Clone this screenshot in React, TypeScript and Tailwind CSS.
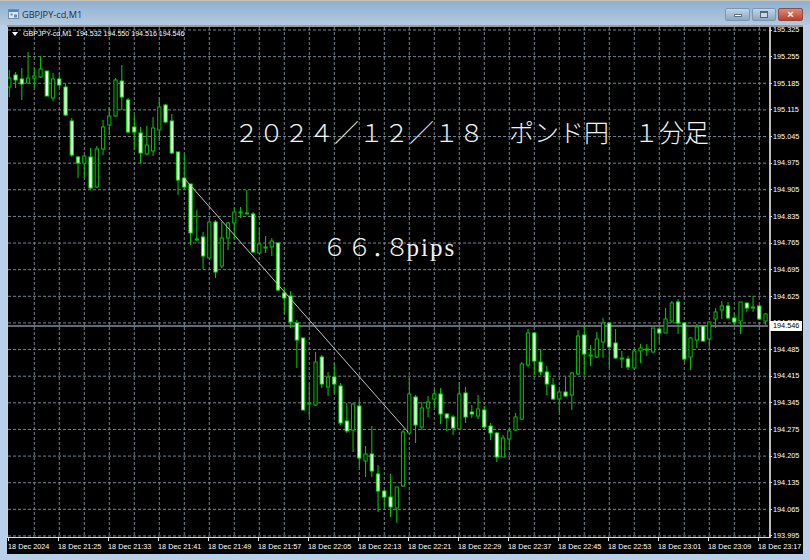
const candles: [number, number, number, number, number][] = [
[70,78,87,97,0],[72,75,80,88,1],[68,79,84,100,1],[52,78,83,83,0],[68,76,78,88,0],[56,69,77,78,0],[71,71,96,96,1],[73,79,98,101,0],[73,79,85,87,1],[83,87,115,116,1],
[118,121,155,157,1],[156,157,163,178,1],[155,156,163,178,0],[148,157,188,190,1],[146,149,187,188,0],[120,127,149,155,0],[107,116,125,135,0],[78,80,116,117,0],[65,81,97,110,1],[98,100,132,133,1],
[115,127,132,150,1],[127,133,153,163,1],[126,145,154,155,0],[117,128,151,156,0],[97,107,130,141,0],[104,105,122,123,1],[114,121,153,154,1],[152,152,180,195,1],[154,178,187,190,1],[184,184,233,245,1],
[210,239,240,241,0],[232,237,256,269,1],[220,222,258,258,0],[220,222,272,278,1],[222,238,266,268,0],[222,223,238,250,0],[208,212,223,239,0],[207,212,213,218,0],[190,213,214,214,0],[212,214,252,253,1],
[228,244,253,254,0],[236,247,248,253,0],[238,241,247,256,0],[243,243,290,291,1],[287,293,298,314,1],[291,296,322,328,1],[320,323,340,368,1],[338,338,410,410,1],[383,403,404,417,0],[352,362,405,406,0],
[355,357,384,388,1],[372,377,387,396,0],[363,377,384,393,1],[383,386,423,425,1],[403,421,431,433,1],[403,404,430,452,0],[400,406,458,468,1],[446,454,461,477,0],[426,454,471,477,1],[465,474,491,512,1],
[490,491,497,507,1],[474,497,507,517,1],[487,487,508,523,0],[430,432,486,487,0],[378,394,433,434,0],[395,397,425,443,1],[402,408,427,430,0],[396,402,408,417,0],[390,394,399,408,0],[388,394,414,424,1],
[413,414,418,431,1],[415,417,428,435,1],[382,394,429,430,0],[387,393,417,423,1],[405,412,414,418,1],[395,409,416,419,0],[406,410,427,428,1],[423,426,433,440,1],[432,433,457,462,1],[435,438,457,457,0],
[430,431,439,450,0],[413,417,430,431,0],[362,364,419,420,0],[329,333,365,367,0],[332,333,361,375,1],[349,362,372,375,1],[366,372,384,395,1],[378,385,399,400,1],[390,392,399,412,0],[377,392,396,397,1],
[372,373,395,410,0],[330,336,374,375,0],[325,335,354,375,1],[345,355,356,366,0],[332,339,357,358,0],[318,323,342,358,0],[322,323,347,368,1],[329,343,358,359,1],[351,358,359,368,0],[356,359,367,370,1],
[350,351,368,368,0],[344,348,351,363,0],[344,349,350,356,0],[328,328,352,353,0],[328,329,333,343,1],[308,319,333,333,0],[301,303,321,323,0],[299,302,323,334,1],[323,323,359,362,1],[337,338,357,370,0],
[324,327,340,348,0],[325,326,341,342,1],[321,322,339,347,0],[308,312,319,328,0],[301,306,310,319,0],[302,306,318,319,1],[313,318,322,326,1],[302,302,321,334,0],[303,303,308,312,1],[296,307,308,312,0],
[305,306,319,320,1],[313,314,321,325,0],
];

const prices = ["195.325","195.255","195.185","195.115","195.045","194.975","194.905","194.835","194.765","194.695","194.625","194.555","194.485","194.415","194.345","194.275","194.205","194.135","194.065","193.995"];
const times = ["18 Dec 2024","18 Dec 21:25","18 Dec 21:33","18 Dec 21:41","18 Dec 21:49","18 Dec 21:57","18 Dec 22:05","18 Dec 22:13","18 Dec 22:21","18 Dec 22:29","18 Dec 22:37","18 Dec 22:45","18 Dec 22:53","18 Dec 23:01","18 Dec 23:09","18 Dec 23:17"];
const gridY = prices.map((_, i) => 30 + i * 26.63);
const gridX = Array.from({ length: 30 }, (_, i) => 34.3 + i * 25);

function Chart() {
  return (
    <svg width={760} height={510} viewBox="8 27 760 510" className="block">
      {gridY.map((y) => (
        <line key={y} x1={8} x2={768} y1={y} y2={y} stroke="#76858f" strokeWidth={1} strokeDasharray="3 2" />
      ))}
      {gridX.map((x) => (
        <line key={x} x1={x} x2={x} y1={27} y2={537} stroke="#76858f" strokeWidth={1} strokeDasharray="3 2" />
      ))}
      <line x1={8} x2={768} y1={326} y2={326} stroke="#5f6a74" strokeWidth={2} />
      {candles.map(([h, t, b, l, white], i) => {
        const x = 9.3 + i * 6.25;
        return (
          <g key={i}>
            <line x1={x} x2={x} y1={h} y2={l} stroke="#00c000" strokeWidth={1.1} />
            <rect x={x - 1.6} y={t} width={3.2} height={Math.max(b - t, 1)} fill={white ? "#ffffff" : "#000000"} stroke={white ? "#00f000" : "#00c000"} strokeWidth={1} />
          </g>
        );
      })}
      <line x1={184} y1={178} x2={408} y2={432} stroke="#c4c4c4" strokeWidth={1} />
    </svg>
  );
}

export default function App() {
  return (
    <div className="w-[810px] h-[560px] flex flex-col overflow-hidden bg-[#b9d1e8] font-['Liberation_Sans',sans-serif]">
      <div className="h-[25px] shrink-0 flex items-center border-t border-[#c9c4b8] bg-gradient-to-b from-[#8fb0d1] to-[#b4c9de] pl-[8px] pr-[7px]">
        <svg width="11" height="11" viewBox="0 0 11 11" className="mt-[3px]">
          <rect x="0.5" y="0.5" width="10" height="9" fill="#dce9f5" stroke="#6f8fb0" />
          <rect x="1" y="1" width="9" height="2" fill="#4f83bd" />
          <rect x="2.5" y="4.5" width="2" height="2" fill="#5e87b0" />
          <rect x="6" y="5.5" width="3" height="3" fill="#5e87b0" />
        </svg>
        <span className="ml-[3px] mt-[3px] text-[9.2px] text-[#22303e] font-['Open_Sans',sans-serif]">GBPJPY-cd,M1</span>
        <div className="ml-auto flex items-center gap-[2px] mt-[3px]">
          <div className="w-[25px] h-[13px] rounded-[2px] border border-[#7d95ae] bg-gradient-to-b from-[#c3d5e7] to-[#8aa7c4] flex items-center justify-center">
            <div className="w-[8px] h-[3px] mt-[2px] bg-white border border-[#5d7186]" />
          </div>
          <div className="w-[24px] h-[13px] rounded-[2px] border border-[#7d95ae] bg-gradient-to-b from-[#c3d5e7] to-[#8aa7c4] flex items-center justify-center">
            <div className="w-[8px] h-[7px] bg-[#c6d6e6] border border-t-2 border-[#4f6378]" />
          </div>
          <div className="w-[25px] h-[13px] rounded-[2px] border border-[#8f4a42] bg-gradient-to-b from-[#d98a7c] to-[#bd3a28] flex items-center justify-center">
            <span className="text-[11px] leading-none font-bold text-white">×</span>
          </div>
        </div>
      </div>
      <div className="flex-1 flex pl-[7px] pr-[7px] pb-[6px] min-h-0">
        <div className="w-[796px] bg-black border-t-2 border-[#9a9a9a] relative">
          <div className="flex">
            <div className="relative w-[761px] h-[510px] border-l border-[#d0d0d0] border-r-2 border-r-[#bdbdbd] border-b border-b-[#e0e0e0] box-content -mr-[2px]">
              <Chart />
              <div className="absolute left-[3px] top-[2px] flex items-center text-[7.1px] leading-[10px] text-white whitespace-pre">
                <span className="w-0 h-0 mr-[5px] ml-[1px] border-x-[3px] border-x-transparent border-t-[4px] border-t-white" />
                <span>GBPJPY-cd,M1  194.532 194.550 194.516 194.546</span>
              </div>
              <div className="absolute left-[226px] top-[87px] text-[25px] leading-[34px] text-[#f2f2f2] font-light whitespace-pre font-['Noto_Sans_CJK_JP',sans-serif]">２０２４／１２／１８　ポンド円　１分足</div>
              <div className="absolute left-[314px] top-[201px] flex items-baseline text-[25px] leading-[34px] text-[#f2f2f2] font-light whitespace-pre font-['Noto_Sans_CJK_JP',sans-serif]">
                <span>６６</span>
                <span className="w-[12.5px]">．</span>
                <span>８</span>
                <span className="tracking-[2px] font-['Liberation_Serif',serif] font-normal -ml-[3px]">pips</span>
              </div>
            </div>
            <div className="relative flex-1 h-[511px]">
              <div className="flex flex-col -mt-[10.3px]">
                {prices.map((p) => (
                  <div key={p} className="h-[26.63px] flex items-center">
                    <span className="w-[3px] h-px bg-[#d0d0d0] mr-[1px] shrink-0" />
                    <span className="text-[7.3px] leading-none text-white">{p}</span>
                  </div>
                ))}
              </div>
              <div className="absolute left-[1px] top-[294px] w-[32px] h-[10px] bg-white text-black text-[7.3px] leading-[10px] pl-[3px]">194.546</div>
            </div>
          </div>
          <div className="flex pl-[1px]">
            {times.map((t) => (
              <div key={t} className="w-[50px] shrink-0 h-[16px] relative">
                <span className="absolute left-0 top-0 w-px h-[3px] bg-[#e0e0e0]" />
                <span className="absolute left-0 top-[3px] text-[7.3px] leading-[12px] text-white whitespace-pre">{t}</span>
              </div>
            ))}
          </div>
        </div>
      </div>
    </div>
  );
}
